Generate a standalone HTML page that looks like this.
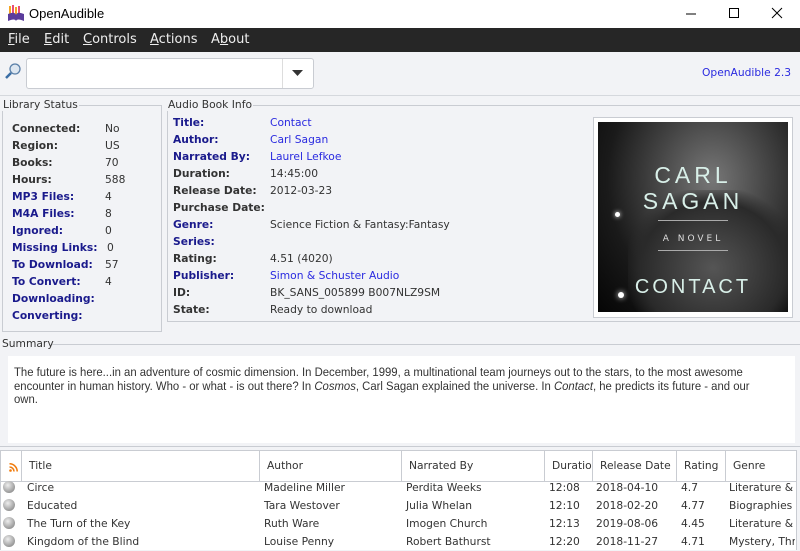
<!DOCTYPE html>
<html><head><style>
*{margin:0;padding:0;box-sizing:border-box}
body{width:800px;height:550px;overflow:hidden;background:#f2f3f6;font-family:"DejaVu Sans",sans-serif;font-size:10.7px;color:#333;position:relative}
.a{position:absolute;white-space:nowrap}
.b{font-weight:bold;color:#333}
.bl{font-weight:bold;color:#1a1a8c}
.lk{color:#2a2ae0}
.grp{position:absolute;border:1px solid #c9ccd2}
.gl{position:absolute;background:#f2f3f6;padding:0 1px;font-size:10.7px;color:#333;top:-8px;left:-1px}
.hd{position:absolute;top:0;height:31px;border-right:1px solid #c9ccd2;padding:8px 0 0 7px;font-size:10.7px}
.ball{position:absolute;left:3px;width:12px;height:12px;border-radius:50%;background:radial-gradient(circle at 40% 35%,#eee,#999 70%,#777)}
</style></head><body>
<div class="a" style="left:0;top:0;width:800px;height:28px;background:#fff"></div>
<svg class="a" style="left:7px;top:5px" width="18" height="17"><rect x="2" y="1" width="2" height="9" fill="#f5a623"/><rect x="5" y="0" width="2" height="10" fill="#e94e77"/><rect x="8" y="2" width="2" height="8" fill="#f5a623"/><rect x="11" y="1" width="2" height="9" fill="#e94e77"/><path d="M1 9 Q8 6 9 10 Q10 6 17 9 L17 16 Q10 13 9 16 Q8 13 1 16Z" fill="#5b3c9c"/></svg>
<div class="a" style="left:29px;top:6px;color:#000;font-family:'Liberation Sans',sans-serif;font-size:13px">OpenAudible</div>
<svg class="a" style="left:680px;top:6px" width="110" height="16"><line x1="6" y1="8" x2="16" y2="8" stroke="#000"/><rect x="49.5" y="2.5" width="9" height="9" fill="none" stroke="#000"/><path d="M92 2 L102 12 M102 2 L92 12" stroke="#000"/></svg>
<div class="a" style="left:0;top:28px;width:800px;height:24px;background:#262626"></div>
<div class="a" style="left:8px;top:32px;color:#eee;font-size:13px"><u>F</u>ile</div>
<div class="a" style="left:44px;top:32px;color:#eee;font-size:13px"><u>E</u>dit</div>
<div class="a" style="left:83px;top:32px;color:#eee;font-size:13px"><u>C</u>ontrols</div>
<div class="a" style="left:150px;top:32px;color:#eee;font-size:13px"><u>A</u>ctions</div>
<div class="a" style="left:211px;top:32px;color:#eee;font-size:13px">A<u>b</u>out</div>
<svg class="a" style="left:4px;top:63px" width="18" height="18"><circle cx="11" cy="6" r="5" fill="#dde6f0" stroke="#5a7fa8" stroke-width="1.3"/><line x1="7" y1="10" x2="2" y2="15" stroke="#3a6ea5" stroke-width="2.5"/></svg>
<div class="a" style="left:26px;top:58px;width:288px;height:31px;background:#fff;border:1px solid #c9ccd2;border-radius:3px"></div>
<div class="a" style="left:282px;top:59px;width:1px;height:29px;background:#ddd"></div>
<svg class="a" style="left:292px;top:70px" width="12" height="7"><path d="M0 0 L11 0 L5.5 6Z" fill="#333"/></svg>
<div class="a lk" style="left:702px;top:66px">OpenAudible 2.3</div>
<div class="a" style="left:0;top:95px;width:800px;height:1px;background:#d5d8dd"></div>

<div class="grp" style="left:2px;top:105px;width:160px;height:227px"><span class="gl">Library Status</span></div>
<div class="a b" style="left:12px;top:120px;line-height:17px">Connected:<br>Region:<br>Books:<br>Hours:<br><span class="bl">MP3 Files:<br>M4A Files:<br>Ignored:<br>Missing Links:<br>To Download:<br>To Convert:<br>Downloading:<br>Converting:</span></div>
<div class="a" style="left:105px;top:120px;line-height:17px">No<br>US<br>70<br>588<br>4<br>8<br>0<br><span style="margin-left:2px">0</span><br>57<br>4</div>

<div class="grp" style="left:167px;top:105px;width:640px;height:217px"><span class="gl">Audio Book Info</span></div>
<div class="a b" style="left:173px;top:114px;line-height:17px"><span class="bl">Title:<br>Author:<br>Narrated By:</span><br>Duration:<br>Release Date:<br>Purchase Date:<br><span class="bl">Genre:<br>Series:</span><br>Rating:<br><span class="bl">Publisher:</span><br>ID:<br>State:</div>
<div class="a" style="left:270px;top:114px;line-height:17px"><span class="lk">Contact<br>Carl Sagan<br>Laurel Lefkoe</span><br>14:45:00<br>2012-03-23<br>&nbsp;<br>Science Fiction &amp; Fantasy:Fantasy<br>&nbsp;<br>4.51 (4020)<br><span class="lk">Simon &amp; Schuster Audio</span><br>BK_SANS_005899 B007NLZ9SM<br>Ready to download</div>

<div class="a" style="left:593px;top:117px;width:200px;height:201px;background:#fff;border:1px solid #c9ccd2"></div>
<div class="a" style="left:598px;top:122px;width:190px;height:190px;background:radial-gradient(ellipse at 60% 30%,#777 0%,#444 35%,#1a1a1a 65%,#050505 100%);overflow:hidden">
<div class="a" style="left:30px;top:68px;width:170px;height:130px;background:radial-gradient(ellipse at 50% 60%,#555,#2a2a2a 60%,transparent 75%)"></div>
<div class="a" style="left:0;top:40px;width:190px;text-align:center;color:#d8efe8;font-family:'Liberation Sans',sans-serif;font-size:23px;letter-spacing:4px;line-height:26px">CARL<br>SAGAN</div>
<div class="a" style="left:60px;top:98px;width:70px;height:1px;background:#aaa"></div>
<div class="a" style="left:0;top:112px;width:190px;text-align:center;color:#ddd;font-size:9px;letter-spacing:3px">A NOVEL</div>
<div class="a" style="left:60px;top:128px;width:70px;height:1px;background:#aaa"></div>
<div class="a" style="left:0;top:154px;width:190px;text-align:center;color:#d8efe8;font-family:'Liberation Sans',sans-serif;font-size:20px;letter-spacing:3px">CONTACT</div>
<div class="a" style="left:20px;top:170px;width:6px;height:6px;border-radius:50%;background:#fff;box-shadow:0 0 6px #fff"></div>
<div class="a" style="left:17px;top:90px;width:5px;height:5px;border-radius:50%;background:#fff;box-shadow:0 0 5px #fff"></div>
</div>

<div class="a" style="left:2px;top:337px">Summary</div>
<div class="a" style="left:52px;top:344px;width:748px;height:1px;background:#c9ccd2"></div>
<div class="a" style="left:8px;top:356px;width:787px;height:87px;background:#fff"></div>
<div class="a" style="left:14px;top:366px;width:822px;white-space:normal;font-family:'Liberation Sans',sans-serif;font-size:12.3px;line-height:13.5px;color:#333;transform:scaleX(0.92);transform-origin:0 0">The future is here...in an adventure of cosmic dimension. In December, 1999, a multinational team journeys out to the stars, to the most awesome encounter in human history. Who - or what - is out there? In <i>Cosmos</i>, Carl Sagan explained the universe. In <i>Contact</i>, he predicts its future - and our own.</div>
<div class="a" style="left:0;top:446px;width:800px;height:1px;background:#c9ccd2"></div>

<div class="a" style="left:0;top:450px;width:797px;height:100px;background:#fff;border-left:1px solid #c9ccd2;border-right:1px solid #c9ccd2"></div>
<div class="a" style="left:0;top:450px;width:797px;height:32px;border-top:1px solid #c9ccd2;border-bottom:1px solid #c9ccd2">
<div class="hd" style="left:0;width:22px;padding:0"><svg style="position:absolute;left:9px;top:12px" width="9" height="9"><circle cx="1.5" cy="7.5" r="1.3" fill="#f07b0c"/><path d="M0.5 4 A4.5 4.5 0 0 1 5 8.5 M0.5 0.8 A7.7 7.7 0 0 1 8.2 8.5" stroke="#f07b0c" stroke-width="1.5" fill="none"/></svg></div>
<div class="hd" style="left:22px;width:238px">Title</div>
<div class="hd" style="left:260px;width:142px">Author</div>
<div class="hd" style="left:402px;width:143px">Narrated By</div>
<div class="hd" style="left:545px;width:48px;overflow:hidden">Duration</div>
<div class="hd" style="left:593px;width:84px">Release Date</div>
<div class="hd" style="left:677px;width:49px">Rating</div>
<div class="hd" style="left:726px;width:70px;border:none">Genre</div>
</div>
<div class="ball" style="top:481px"></div><div class="ball" style="top:499px"></div><div class="ball" style="top:517px"></div><div class="ball" style="top:535px"></div>
<div class="a" style="left:27px;top:479px;line-height:18px">Circe<br>Educated<br>The Turn of the Key<br>Kingdom of the Blind</div>
<div class="a" style="left:264px;top:479px;line-height:18px">Madeline Miller<br>Tara Westover<br>Ruth Ware<br>Louise Penny</div>
<div class="a" style="left:406px;top:479px;line-height:18px">Perdita Weeks<br>Julia Whelan<br>Imogen Church<br>Robert Bathurst</div>
<div class="a" style="left:549px;top:479px;line-height:18px">12:08<br>12:10<br>12:13<br>12:20</div>
<div class="a" style="left:596px;top:479px;line-height:18px">2018-04-10<br>2018-02-20<br>2019-08-06<br>2018-11-27</div>
<div class="a" style="left:681px;top:479px;line-height:18px">4.7<br>4.77<br>4.45<br>4.71</div>
<div class="a" style="left:729px;top:479px;line-height:18px;width:66px;overflow:hidden">Literature &amp;<br>Biographies &amp;<br>Literature &amp;<br>Mystery, Thr</div>
</body></html>
